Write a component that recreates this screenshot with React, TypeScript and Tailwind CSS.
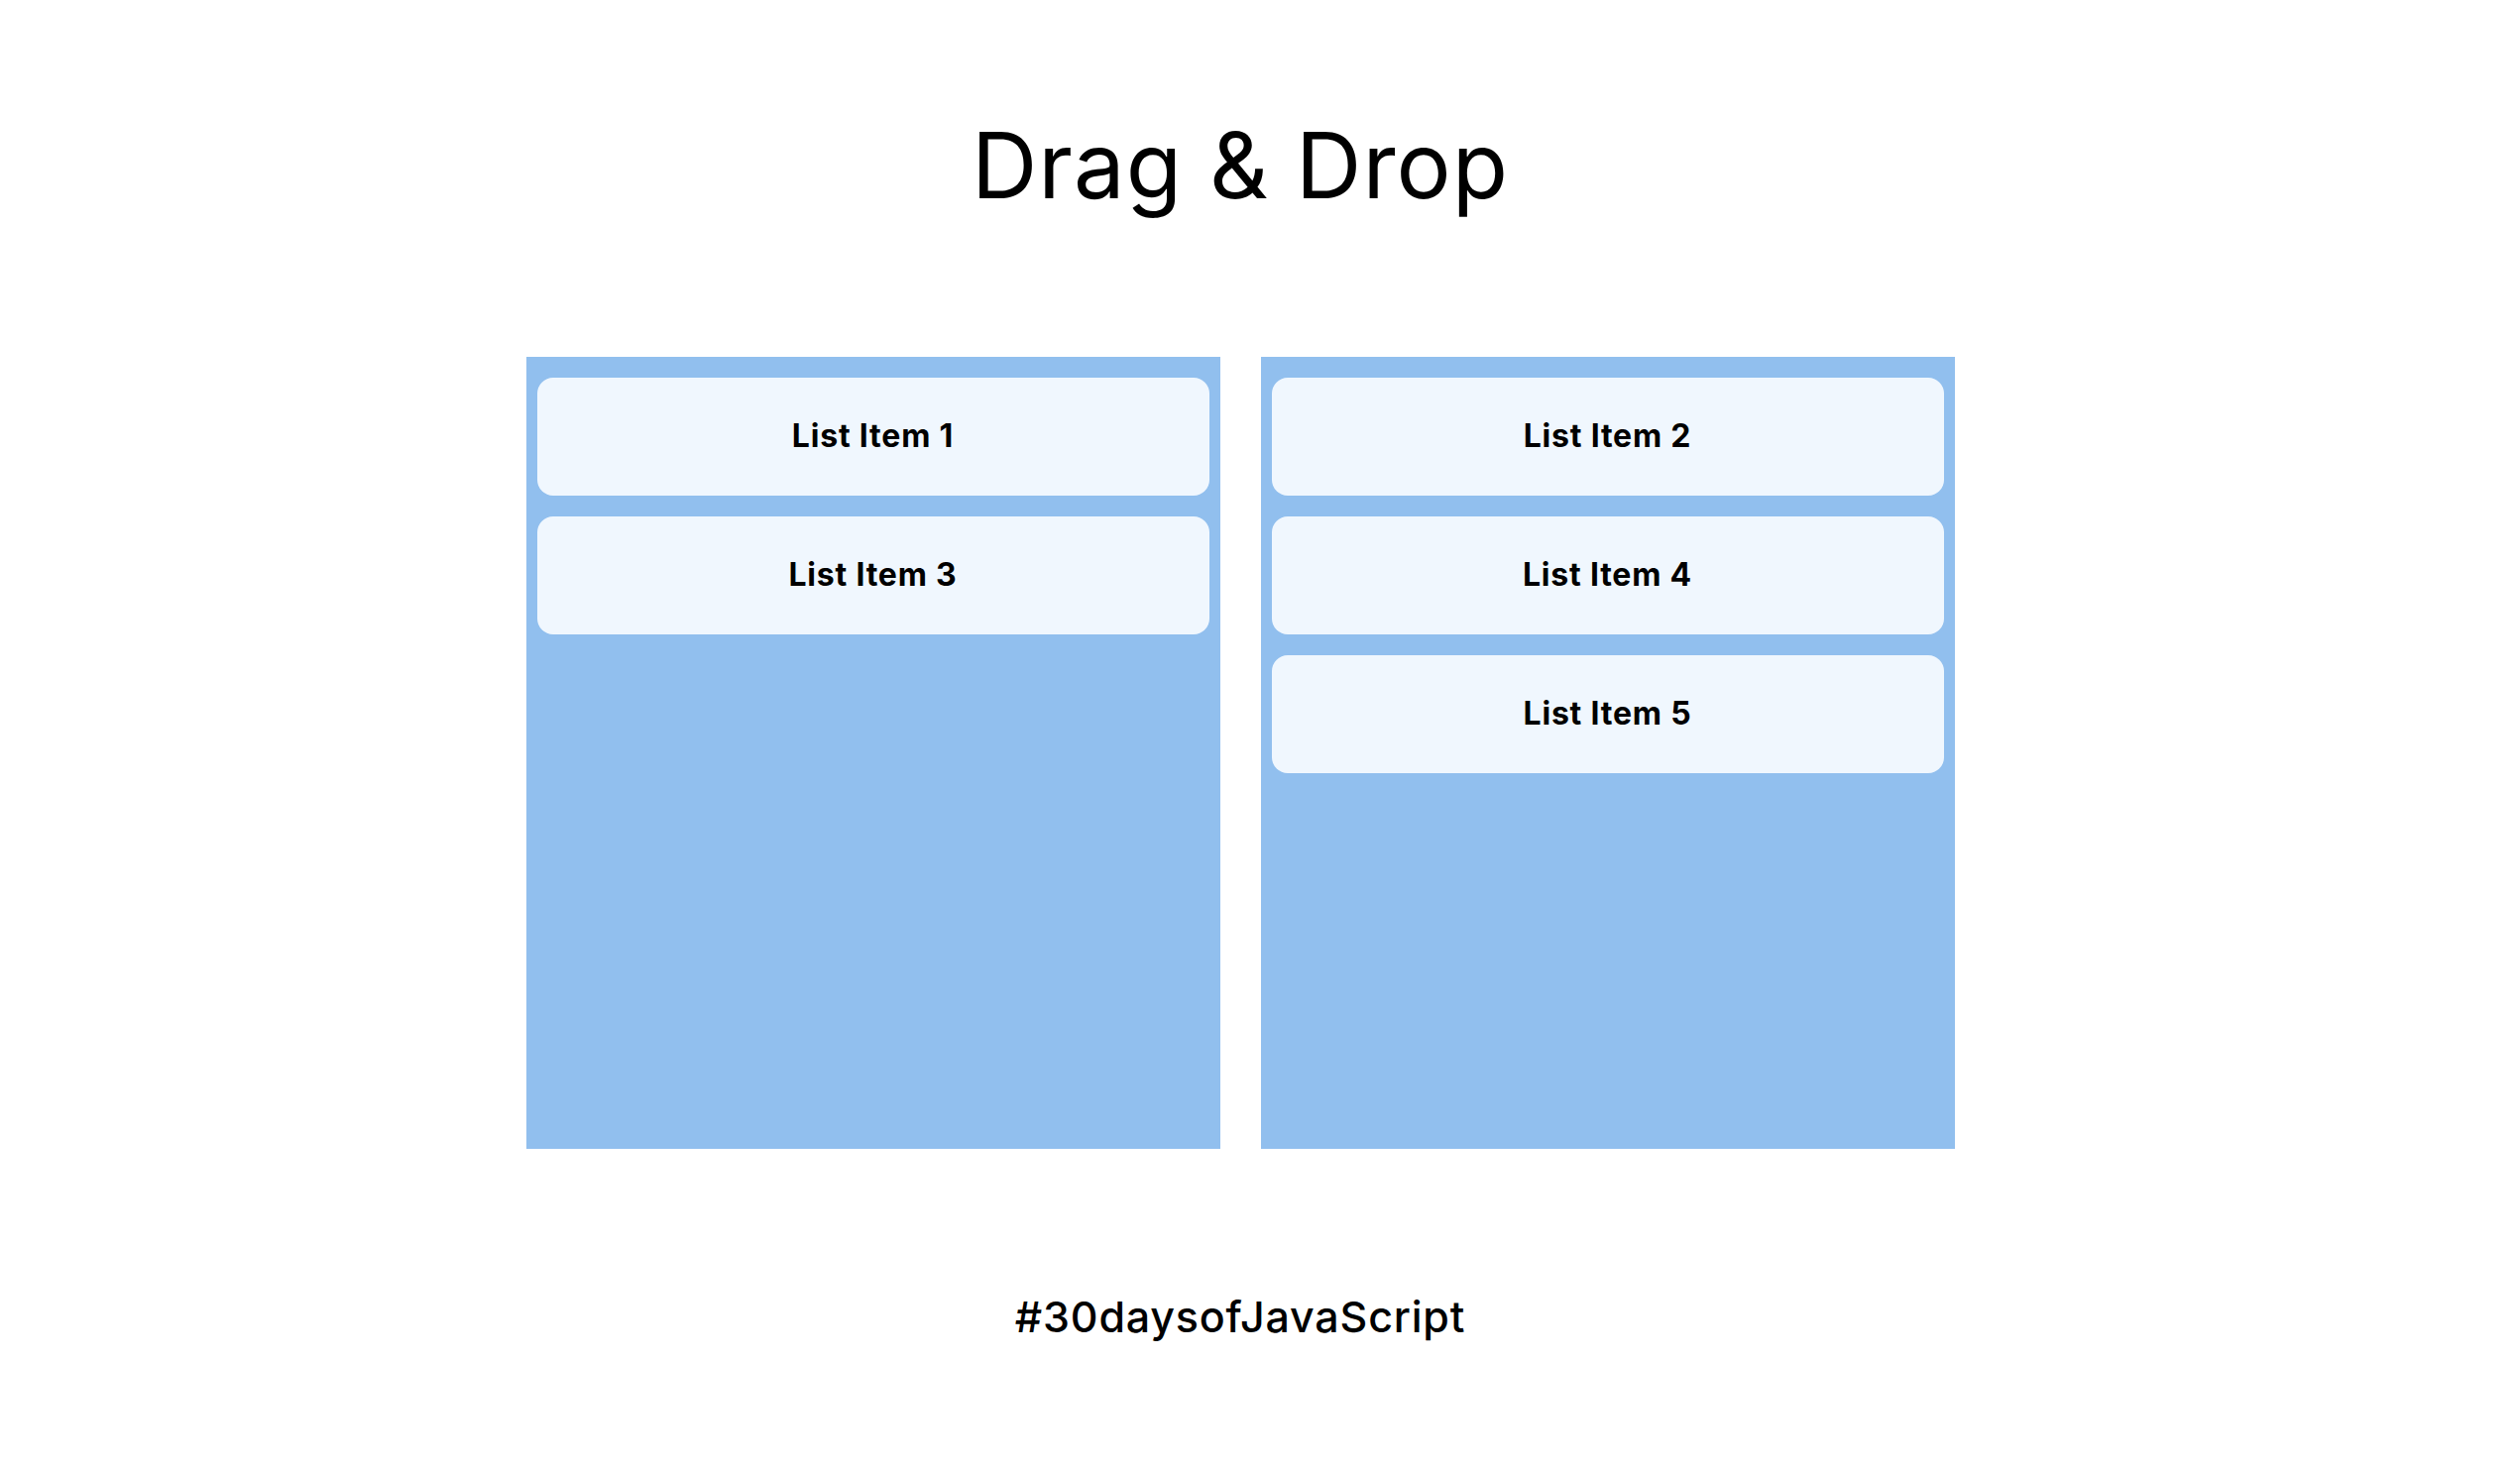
import React from "react";

const columns = [
  ["List Item 1", "List Item 3"],
  ["List Item 2", "List Item 4", "List Item 5"],
];

const App = () => {
  return (
    <div
      className="w-full h-[1486px] bg-white text-black flex flex-col items-center pr-[40px]"
      style={{ fontFamily: "Inter, 'Open Sans', sans-serif" }}
    >
      <h1 className="mt-[121px] text-[92px] leading-none font-normal tracking-[1px]">
        Drag &amp; Drop
      </h1>

      <div className="mt-[147px] flex gap-[41px]">
        {columns.map((items, i) => (
          <div key={i} className="w-[700px] h-[799px] bg-[#91bfee] px-[11px] py-[10px] flex flex-col">
            {items.map((item) => (
              <div
                key={item}
                className="my-[10.5px] h-[119px] rounded-[16px] bg-[#f0f7fe] flex items-center justify-center text-[32px] font-bold tracking-[0.8px]"
              >
                {item}
              </div>
            ))}
          </div>
        ))}
      </div>

      <p className="mt-[137px] text-[43px] font-medium tracking-[0.8px]">#30daysofJavaScript</p>
    </div>
  );
};

export default App;
